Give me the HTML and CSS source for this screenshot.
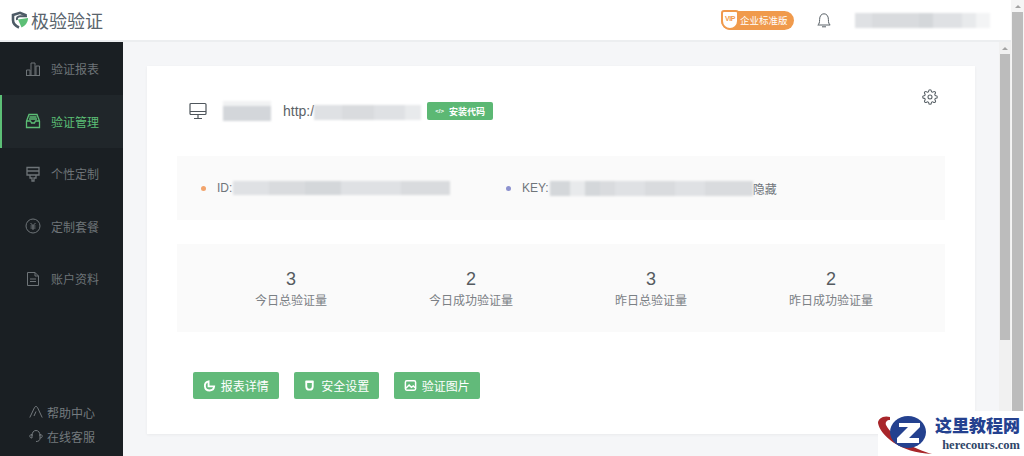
FILE: index.html
```html
<!DOCTYPE html>
<html>
    <head>
        <title>极验验证</title>
        <meta charset="utf-8">
        <link rel="stylesheet" href="styles.css">
    </head>
    <body>
        <div class="app">
            <div class="header">
                <div class="logo">
                    <svg width="18" height="18" viewBox="0 0 18 18" fill="none"><path d="M15.5 4.5 L9 1.8 L2 4 V9 C2 12.5 4.5 15 8 16.5" stroke="#4d5b66" stroke-width="2.6"/><path d="M16 5.2 H9 C6.5 5.2 5.5 7 6 9" stroke="#4d5b66" stroke-width="2"/><path d="M7 8.5 L17 7 C17 11.5 14 15 10.5 16.5 Z" fill="#5cbf76"/></svg>
                    <span>极验验证</span>
                </div>
                <div class="header-right">
                    <div class="vip">
                        <span class="vip-shield">VIP</span>
                        <span>企业标准版</span>
                    </div>
                    <svg class="bell" width="14" height="15" viewBox="0 0 14 15" fill="none" stroke="#5a6268" stroke-width="1"><path d="M.8 12 C2.2 11 2.6 9.5 2.6 6.5 C2.6 3 4.4 .8 7 .8 C9.6 .8 11.4 3 11.4 6.5 C11.4 9.5 11.8 11 13.2 12 Z"/><path d="M5 13.8 H9"/></svg>
                    <div class="smudge user-smudge">
                        <i class="s2" style="width:18px"></i><i class="s3" style="width:48px"></i><i class="s1" style="width:15px"></i><i class="s2" style="width:30px"></i><i class="s4" style="width:14px"></i><i class="s5" style="width:15px"></i>
                    </div>
                </div>
            </div>

            <div class="body">
                <div class="sidebar">
                    <div class="menu">
                        <div class="menu-item">
                            <svg width="16" height="16" viewBox="0 0 16 16" fill="none" stroke="currentColor"><path d="M1.5 14.5 V9 H5 V14.5 M6 14.5 V2 H10 V14.5 M11 14.5 V5 H14.5 V14.5 M1 14.5 H15"/></svg>
                            <span>验证报表</span>
                        </div>
                        <div class="menu-item active">
                            <svg width="16" height="16" viewBox="0 0 16 16" fill="none" stroke="currentColor" stroke-width="1.3"><path d="M4 1.5 H12 L14.5 8 V14.5 H1.5 V8 Z M1.5 8 H5.5 L6.5 10 H9.5 L10.5 8 H14.5 M4.5 4 H11.5 M4 6 H12"/></svg>
                            <span>验证管理</span>
                        </div>
                        <div class="menu-item">
                            <svg width="16" height="16" viewBox="0 0 16 16" fill="none" stroke="currentColor" stroke-width="1.3"><path d="M2 1.5 H14 V9 H2 Z M2 5 H14 M5 9 V12 H7 V15 H9 V12 H11 V9"/></svg>
                            <span>个性定制</span>
                        </div>
                        <div class="menu-item">
                            <svg width="16" height="16" viewBox="0 0 16 16" fill="none" stroke="currentColor"><circle cx="8" cy="8" r="7"/><path d="M5.5 5 L8 7.5 L10.5 5 M5.5 8 H10.5 M5.5 10 H10.5 M8 7.5 V12"/></svg>
                            <span>定制套餐</span>
                        </div>
                        <div class="menu-item">
                            <svg width="16" height="16" viewBox="0 0 16 16" fill="none" stroke="currentColor"><path d="M2.5 1.5 H10 L13.5 5 V14.5 H2.5 Z M10 1.5 V5 H13.5 M5 8 H11 M5 10.5 H11"/></svg>
                            <span>账户资料</span>
                        </div>
                    </div>
                    <div class="side-links">
                        <div class="side-link">
                            <svg width="14" height="14" viewBox="0 0 14 14" fill="none" stroke="currentColor"><path d="M.8 12.5 L5.5 2.5 C6.2 1.2 7.8 1.2 8.5 2.5 L13.2 12.5 M5 11 L7 6.5"/></svg>
                            <span>帮助中心</span>
                        </div>
                        <div class="side-link">
                            <svg width="14" height="14" viewBox="0 0 14 14" fill="none" stroke="currentColor"><path d="M3 7 C3 3.5 4.5 1.5 7 1.5 C9.5 1.5 11 3.5 11 7 M3 5.5 C1.5 5.5 0.8 6.2 0.8 7.2 C0.8 8.3 1.5 9 3 9 Z M11 5.5 C12.5 5.5 13.2 6.2 13.2 7.2 C13.2 8.3 12.5 9 11 9 Z M11 9 C11 11.5 9.5 12.5 7 12.5"/></svg>
                            <span>在线客服</span>
                        </div>
                    </div>
                </div>

                <div class="content">
                    <div class="card">
                        <div class="card-top">
                            <svg class="monitor" width="18" height="18" viewBox="0 0 18 18" fill="none" stroke="#4f565c" stroke-width="1.2"><rect x="1" y="1.5" width="16" height="11" rx="1"/><path d="M1 9.5 H17 M9 12.5 V16 M5 16.5 H13"/></svg>
                            <div class="smudge name-smudge"><i class="name-fill" style="width:48px"></i></div>
                            <span class="url">http:/</span>
                            <div class="smudge url-smudge">
                                <i class="s2" style="width:28px"></i><i class="s3" style="width:32px"></i><i class="s2" style="width:31px"></i><i class="s4" style="width:16px"></i>
                            </div>
                            <div class="install"><span class="code-mark">&lt;/&gt;</span>安装代码</div>
                            <svg class="gear" width="16" height="16" viewBox="0 0 24 24" fill="none" stroke="#5a6268" stroke-width="1.6"><circle cx="12" cy="12" r="3"/><path d="M19.4 15a1.65 1.65 0 0 0 .33 1.82l.06.06a2 2 0 0 1 0 2.83 2 2 0 0 1-2.83 0l-.06-.06a1.65 1.65 0 0 0-1.82-.33 1.65 1.65 0 0 0-1 1.51V21a2 2 0 0 1-2 2 2 2 0 0 1-2-2v-.09A1.65 1.65 0 0 0 9 19.4a1.65 1.65 0 0 0-1.82.33l-.06.06a2 2 0 0 1-2.83 0 2 2 0 0 1 0-2.83l.06-.06a1.65 1.65 0 0 0 .33-1.82 1.65 1.65 0 0 0-1.51-1H3a2 2 0 0 1-2-2 2 2 0 0 1 2-2h.09A1.65 1.65 0 0 0 4.6 9a1.65 1.65 0 0 0-.33-1.82l-.06-.06a2 2 0 0 1 0-2.83 2 2 0 0 1 2.83 0l.06.06a1.65 1.65 0 0 0 1.82.33H9a1.65 1.65 0 0 0 1-1.51V3a2 2 0 0 1 2-2 2 2 0 0 1 2 2v.09a1.65 1.65 0 0 0 1 1.51 1.65 1.65 0 0 0 1.82-.33l.06-.06a2 2 0 0 1 2.83 0 2 2 0 0 1 0 2.83l-.06.06a1.65 1.65 0 0 0-.33 1.82V9a1.65 1.65 0 0 0 1.51 1H21a2 2 0 0 1 2 2 2 2 0 0 1-2 2h-.09a1.65 1.65 0 0 0-1.51 1z"/></svg>
                        </div>

                        <div class="panel key-panel">
                            <div class="key-item id-item">
                                <i class="dot orange"></i>
                                <span>ID:</span>
                                <div class="smudge id-smudge">
                                    <i class="s2" style="width:36px"></i><i class="s3" style="width:36px"></i><i class="s1" style="width:36px"></i><i class="s2" style="width:60px"></i><i class="s3" style="width:49px"></i>
                                </div>
                            </div>
                            <div class="key-item">
                                <i class="dot purple"></i>
                                <span>KEY:</span>
                                <div class="smudge key-smudge">
                                    <i class="s1" style="width:20px"></i><i class="s4" style="width:15px"></i><i class="s1" style="width:15px"></i><i class="s3" style="width:15px"></i><i class="s2" style="width:30px"></i><i class="s3" style="width:30px"></i><i class="s2" style="width:30px"></i><i class="s3" style="width:48px"></i>
                                </div>
                                <span>隐藏</span>
                            </div>
                        </div>

                        <div class="panel stats">
                            <div class="stat"><b>3</b><span>今日总验证量</span></div>
                            <div class="stat"><b>2</b><span>今日成功验证量</span></div>
                            <div class="stat"><b>3</b><span>昨日总验证量</span></div>
                            <div class="stat"><b>2</b><span>昨日成功验证量</span></div>
                        </div>

                        <div class="actions">
                            <div class="btn">
                                <svg width="13" height="13" viewBox="0 0 14 14" fill="none" stroke="#fff" stroke-width="2"><path d="M6 2.5 A5 5 0 1 0 12 8 H6 Z"/></svg>
                                <span>报表详情</span>
                            </div>
                            <div class="btn">
                                <svg width="13" height="13" viewBox="0 0 14 14" fill="none" stroke="#fff" stroke-width="2"><path d="M3.5 3 H10.5 V8 C10.5 10 9 11.5 7 11.5 C5 11.5 3.5 10 3.5 8 Z"/><path d="M3 3 H11" stroke-width="2.4"/></svg>
                                <span>安全设置</span>
                            </div>
                            <div class="btn">
                                <svg width="13" height="13" viewBox="0 0 14 14" fill="none" stroke="#fff" stroke-width="1.6"><rect x="1.5" y="2" width="11" height="10" rx="1.5"/><path d="M2 10 L5.5 6.5 L8 9 L10 7.5 L12 9.5" /></svg>
                                <span>验证图片</span>
                            </div>
                        </div>
                    </div>
                </div>

                <div class="scrollbar inner-bar"><span class="arrow"></span><span class="thumb"></span></div>
            </div>
        </div>

        <div class="scrollbar outer-bar"><span class="arrow"></span><span class="thumb"></span></div>

        <div class="watermark">
            <svg width="56" height="45" viewBox="0 0 56 45">
                <path d="M12 6 C5 4 0 8 0 12 C2 24 22 42 54 43 C36 38 14 26 8 14 C7 11 9 9 12 9 Z" fill="#a8262a"/>
                <ellipse cx="30" cy="21" rx="18" ry="16" fill="#24418f"/>
                <path d="M21 12 H42 V16 L31 27 H41 V32 H19 V27 L30 16 H21 Z" fill="#fff"/>
            </svg>
            <div class="watermark-text">
                <strong>这里教程网</strong>
                <span>herecours.com</span>
            </div>
        </div>
    </body>
</html>
```

FILE: styles.css
```css
* {box-sizing: border-box;}
html, body {height: 100%;}
body {margin: 0; overflow: hidden; background: #fff; display: flex; font-family: "Liberation Sans", "Noto Sans CJK SC", sans-serif; color: #5c6268;}

.app {flex: 1; min-width: 0; display: flex; flex-direction: column;}

.header {height: 42px; flex: none; display: flex; justify-content: space-between; align-items: center; background: #fff; border-bottom: 2px solid #eceef0; padding: 0 21px 0 11px;}
.logo {display: flex; align-items: center; gap: 2px; font-size: 18px; font-weight: normal; color: #59646c;}
.header-right {display: flex; align-items: center;}
.vip {width: 73px; height: 19px; margin-right: 23px; padding-left: 19px; display: flex; align-items: center; position: relative; background: #f09a4c; border-radius: 10px; color: #fff; font-size: 9.5px; white-space: nowrap;}
.vip-shield {position: absolute; left: 0; top: -1px; width: 18px; height: 20px; overflow: hidden; background: #fff; border: 2px solid #f09a4c; border-radius: 3px 3px 9px 9px; color: #f09a4c; font-size: 7px; font-weight: bold; letter-spacing: -.5px; line-height: 14px; text-align: center;}
.bell {margin-right: 24px;}

.smudge {display: flex; overflow: hidden; filter: blur(1px);}
.smudge i {display: block; height: 100%;}
.s1 {background: #d4d7da;}
.s2 {background: #dfe1e4;}
.s3 {background: #d9dbde;}
.s4 {background: #e8eaec;}
.s5 {background: #f3f4f5;}
.user-smudge {width: 135px; height: 15px;}

.body {flex: 1; min-height: 0; display: flex;}

.sidebar {width: 123px; flex: none; display: flex; flex-direction: column; justify-content: space-between; background: #1a1f23; color: #6e7478;}
.menu {padding-top: .5px;}
.menu-item {height: 52.5px; display: flex; align-items: center; gap: 10px; padding-left: 25px; font-size: 12px;}
.menu-item.active {background: #20262a; border-left: 2px solid #5cbf76; padding-left: 23px; color: #5cbf76;}
.side-links {padding: 0 0 8px 29px; font-size: 12px; color: #747a7e;}
.side-link {height: 24px; display: flex; align-items: center; gap: 4px;}

.content {flex: 1; min-width: 0; padding: 24px 24px 0 24px; background: #f5f6f8;}
.card {height: 368px; padding: 0 30px; background: #fff; box-shadow: 0 1px 3px rgba(0, 0, 0, .05);}
.card-top {height: 90px; display: flex; align-items: center; padding: 0 7px 0 12px; font-size: 14px;}
.monitor {margin-right: 16px; flex: none;}
.name-smudge {width: 48px; height: 20px; margin-right: 12px;}
.name-fill {background: linear-gradient(#f1f2f3 0 25%, #d3d6da 25%);}
.url {color: #5c6268;}
.url-smudge {width: 107px; height: 15px; margin: 3px 6px 0 0;}
.install {width: 66px; height: 18px; display: flex; align-items: center; justify-content: center; gap: 5px; background: #5cb874; border-radius: 2px; color: #fff; font-size: 9px; font-weight: bold;}
.code-mark {font-size: 6px;}
.gear {margin: -28px 0 0 auto;}

.panel {display: flex; background: #fafafa;}
.key-panel {height: 64px; align-items: center; padding-left: 24px;}
.key-item {display: flex; align-items: center; font-size: 12px; color: #6f757a;}
.id-item {width: 305px;}
.dot {width: 5px; height: 5px; border-radius: 50%; margin-right: 11px;}
.orange {background: #f2a46c;}
.purple {background: #8d92cf;}
.id-smudge {width: 217px; height: 14px; margin-left: 1px;}
.key-smudge {width: 203px; height: 15px; margin-left: 1px;}

.stats {height: 88px; margin-top: 24px; padding: 3px 24px 0; align-items: center;}
.stat {flex: 1; display: flex; flex-direction: column; align-items: center; font-size: 12px; color: #7b8085;}
.stat b {font-size: 18px; font-weight: normal; line-height: 20px; color: #555b60;}
.stat span {line-height: 20px; margin-top: 2px;}

.actions {display: flex; gap: 15px; margin-top: 40px; padding-left: 16px;}
.btn {width: 85.5px; height: 27px; display: flex; align-items: center; justify-content: center; gap: 5px; background: #62ba7a; border-radius: 2px; color: #fff; font-size: 12px;}

.scrollbar {flex: none; display: flex; flex-direction: column; align-items: center;}
.inner-bar {width: 12px; background: #f1f1f1;}
.outer-bar {width: 13px; background: #f5f5f5;}
.arrow {width: 0; height: 0; margin: 5px 0 4px; border: 3px solid transparent; border-top: 0; border-bottom: 3px solid #a3a3a3;}
.thumb {background: #bcbcbc;}
.inner-bar .thumb {width: 10px; height: 286px;}
.outer-bar .thumb {width: 11px; height: 430px;}

.watermark {position: absolute; right: 0; bottom: 0; width: 146px; height: 45px; display: flex; background: #fff;}
.watermark svg {flex: none; margin-right: 1px;}
.watermark-text {padding-top: 4px; display: flex; flex-direction: column; align-items: flex-end; font-family: "Liberation Serif", "Noto Sans CJK SC", serif; font-weight: bold; color: #24418f;}
.watermark-text strong {font-size: 17px; line-height: 23px;}
.watermark-text span {font-size: 12.5px; line-height: 15px; color: #2f4668;}
```
